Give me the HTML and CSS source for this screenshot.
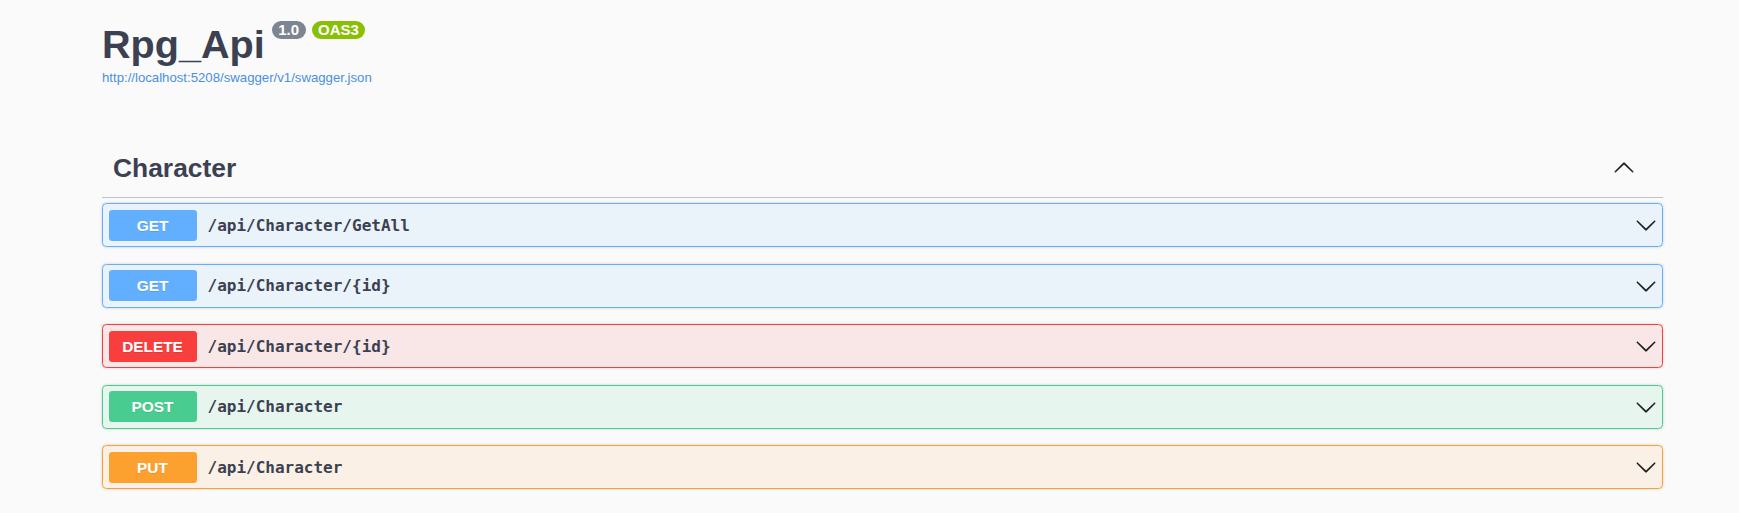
FILE: index.html
```html
<!DOCTYPE html>
<html lang="en">
<head>
<meta charset="utf-8">
<title>Rpg_Api</title>
<link rel="stylesheet" href="styles.css">
</head>
<body>
<div class="wrapper">
  <section class="info">
    <div class="title-row">
      <h2 class="title">Rpg_Api</h2>
      <span class="badge badge-version">1.0</span>
      <span class="badge badge-oas">OAS3</span>
    </div>
    <a class="spec-link" href="#">http://localhost:5208/swagger/v1/swagger.json</a>
  </section>

  <section class="tag-section">
    <div class="tag-header">
      <h3 class="tag-name">Character</h3>
      <span class="tag-toggle">
        <svg class="arrow" width="22" height="22" viewBox="0 0 20 20"><path d="M17.418 13.891c.272.268.709.268.979 0s.271-.701 0-.969l-7.908-7.830c-.27-.268-.707-.268-.979 0l-7.908 7.830c-.27.268-.27.701 0 .969.271.268.709.268.979 0L10 6.75l7.418 7.141z"/></svg>
      </span>
    </div>

    <div class="opblock get">
      <span class="method">GET</span>
      <span class="path">/api/Character/GetAll</span>
      <svg class="arrow" width="22" height="22" viewBox="0 0 20 20"><path d="M17.418 6.109c.272-.268.709-.268.979 0s.271.701 0 .969l-7.908 7.83c-.27.268-.707.268-.979 0l-7.908-7.83c-.27-.268-.27-.701 0-.969.271-.268.709-.268.979 0L10 13.25l7.418-7.141z"/></svg>
    </div>
    <div class="opblock get">
      <span class="method">GET</span>
      <span class="path">/api/Character/{id}</span>
      <svg class="arrow" width="22" height="22" viewBox="0 0 20 20"><path d="M17.418 6.109c.272-.268.709-.268.979 0s.271.701 0 .969l-7.908 7.83c-.27.268-.707.268-.979 0l-7.908-7.83c-.27-.268-.27-.701 0-.969.271-.268.709-.268.979 0L10 13.25l7.418-7.141z"/></svg>
    </div>
    <div class="opblock delete">
      <span class="method">DELETE</span>
      <span class="path">/api/Character/{id}</span>
      <svg class="arrow" width="22" height="22" viewBox="0 0 20 20"><path d="M17.418 6.109c.272-.268.709-.268.979 0s.271.701 0 .969l-7.908 7.83c-.27.268-.707.268-.979 0l-7.908-7.83c-.27-.268-.27-.701 0-.969.271-.268.709-.268.979 0L10 13.25l7.418-7.141z"/></svg>
    </div>
    <div class="opblock post">
      <span class="method">POST</span>
      <span class="path">/api/Character</span>
      <svg class="arrow" width="22" height="22" viewBox="0 0 20 20"><path d="M17.418 6.109c.272-.268.709-.268.979 0s.271.701 0 .969l-7.908 7.83c-.27.268-.707.268-.979 0l-7.908-7.83c-.27-.268-.27-.701 0-.969.271-.268.709-.268.979 0L10 13.25l7.418-7.141z"/></svg>
    </div>
    <div class="opblock put">
      <span class="method">PUT</span>
      <span class="path">/api/Character</span>
      <svg class="arrow" width="22" height="22" viewBox="0 0 20 20"><path d="M17.418 6.109c.272-.268.709-.268.979 0s.271.701 0 .969l-7.908 7.83c-.27.268-.707.268-.979 0l-7.908-7.83c-.27-.268-.27-.701 0-.969.271-.268.709-.268.979 0L10 13.25l7.418-7.141z"/></svg>
    </div>
  </section>
</div>
</body>
</html>
```

FILE: styles.css
```css
html, body {
  margin: 0;
  padding: 0;
  background: #fafafa;
}

body {
  font-family: "Liberation Sans", Arial, sans-serif;
  color: #3b4151;
}

.wrapper {
  width: 1561px;
  margin-left: 102px;
  padding-top: 20.6px;
}

.info {
  display: flex;
  flex-direction: column;
  align-items: flex-start;
}

.title-row {
  display: flex;
  align-items: flex-start;
}

.title {
  margin: 0;
  font-size: 39.6px;
  line-height: 46px;
  font-weight: 700;
  color: #3b4151;
}

.badge {
  display: inline-block;
  height: 18px;
  line-height: 18px;
  padding: 0 6.5px;
  border-radius: 60px;
  color: #fff;
  font-size: 15px;
  font-weight: 700;
  margin-top: 0;
}

.badge-version {
  background: #7d8492;
  margin-left: 7px;
}

.badge-oas {
  background: #89bf04;
  margin-left: 6px;
}

.spec-link {
  margin-top: 3.5px;
  font-size: 13.2px;
  line-height: 16px;
  color: #4990e2;
  text-decoration: none;
}

.tag-section {
  margin-top: 59px;
}

.tag-header {
  display: flex;
  align-items: center;
  justify-content: space-between;
  padding: 8px 28px 14px 11px;
  border-bottom: 1px solid rgba(59, 65, 81, 0.3);
}

.tag-name {
  margin: 0;
  font-size: 26.4px;
  line-height: 30px;
  font-weight: 700;
  color: #3b4151;
}

.tag-toggle {
  display: flex;
  width: 22px;
  height: 22px;
}

.arrow {
  display: block;
  fill: #1f1f1f;
}

.tag-header + .opblock {
  margin-top: 5px;
}

.opblock {
  display: flex;
  align-items: center;
  padding: 5.5px;
  border: 1px solid #000;
  border-radius: 4.4px;
  box-shadow: 0 0 3px rgba(0, 0, 0, 0.19);
  margin-bottom: 16.5px;
}

.method {
  flex: none;
  width: 88px;
  height: 31px;
  line-height: 31px;
  text-align: center;
  border-radius: 3.3px;
  color: #fff;
  font-size: 15.4px;
  font-weight: 700;
  text-shadow: 0 1px 0 rgba(0, 0, 0, 0.1);
}

.path {
  flex: 1;
  padding: 0 11px;
  font-family: "DejaVu Sans Mono", "Liberation Mono", monospace;
  font-weight: 700;
  font-size: 16px;
  color: #3b4151;
}

.opblock .arrow {
  flex: none;
}

.opblock.get {
  background: rgba(97, 175, 254, 0.1);
  border-color: #61affe;
}
.opblock.get .method { background: #61affe; }

.opblock.delete {
  background: rgba(249, 62, 62, 0.1);
  border-color: #f93e3e;
}
.opblock.delete .method { background: #f93e3e; }

.opblock.post {
  background: rgba(73, 204, 144, 0.1);
  border-color: #49cc90;
}
.opblock.post .method { background: #49cc90; }

.opblock.put {
  background: rgba(252, 161, 48, 0.1);
  border-color: #fca130;
}
.opblock.put .method { background: #fca130; }
```
